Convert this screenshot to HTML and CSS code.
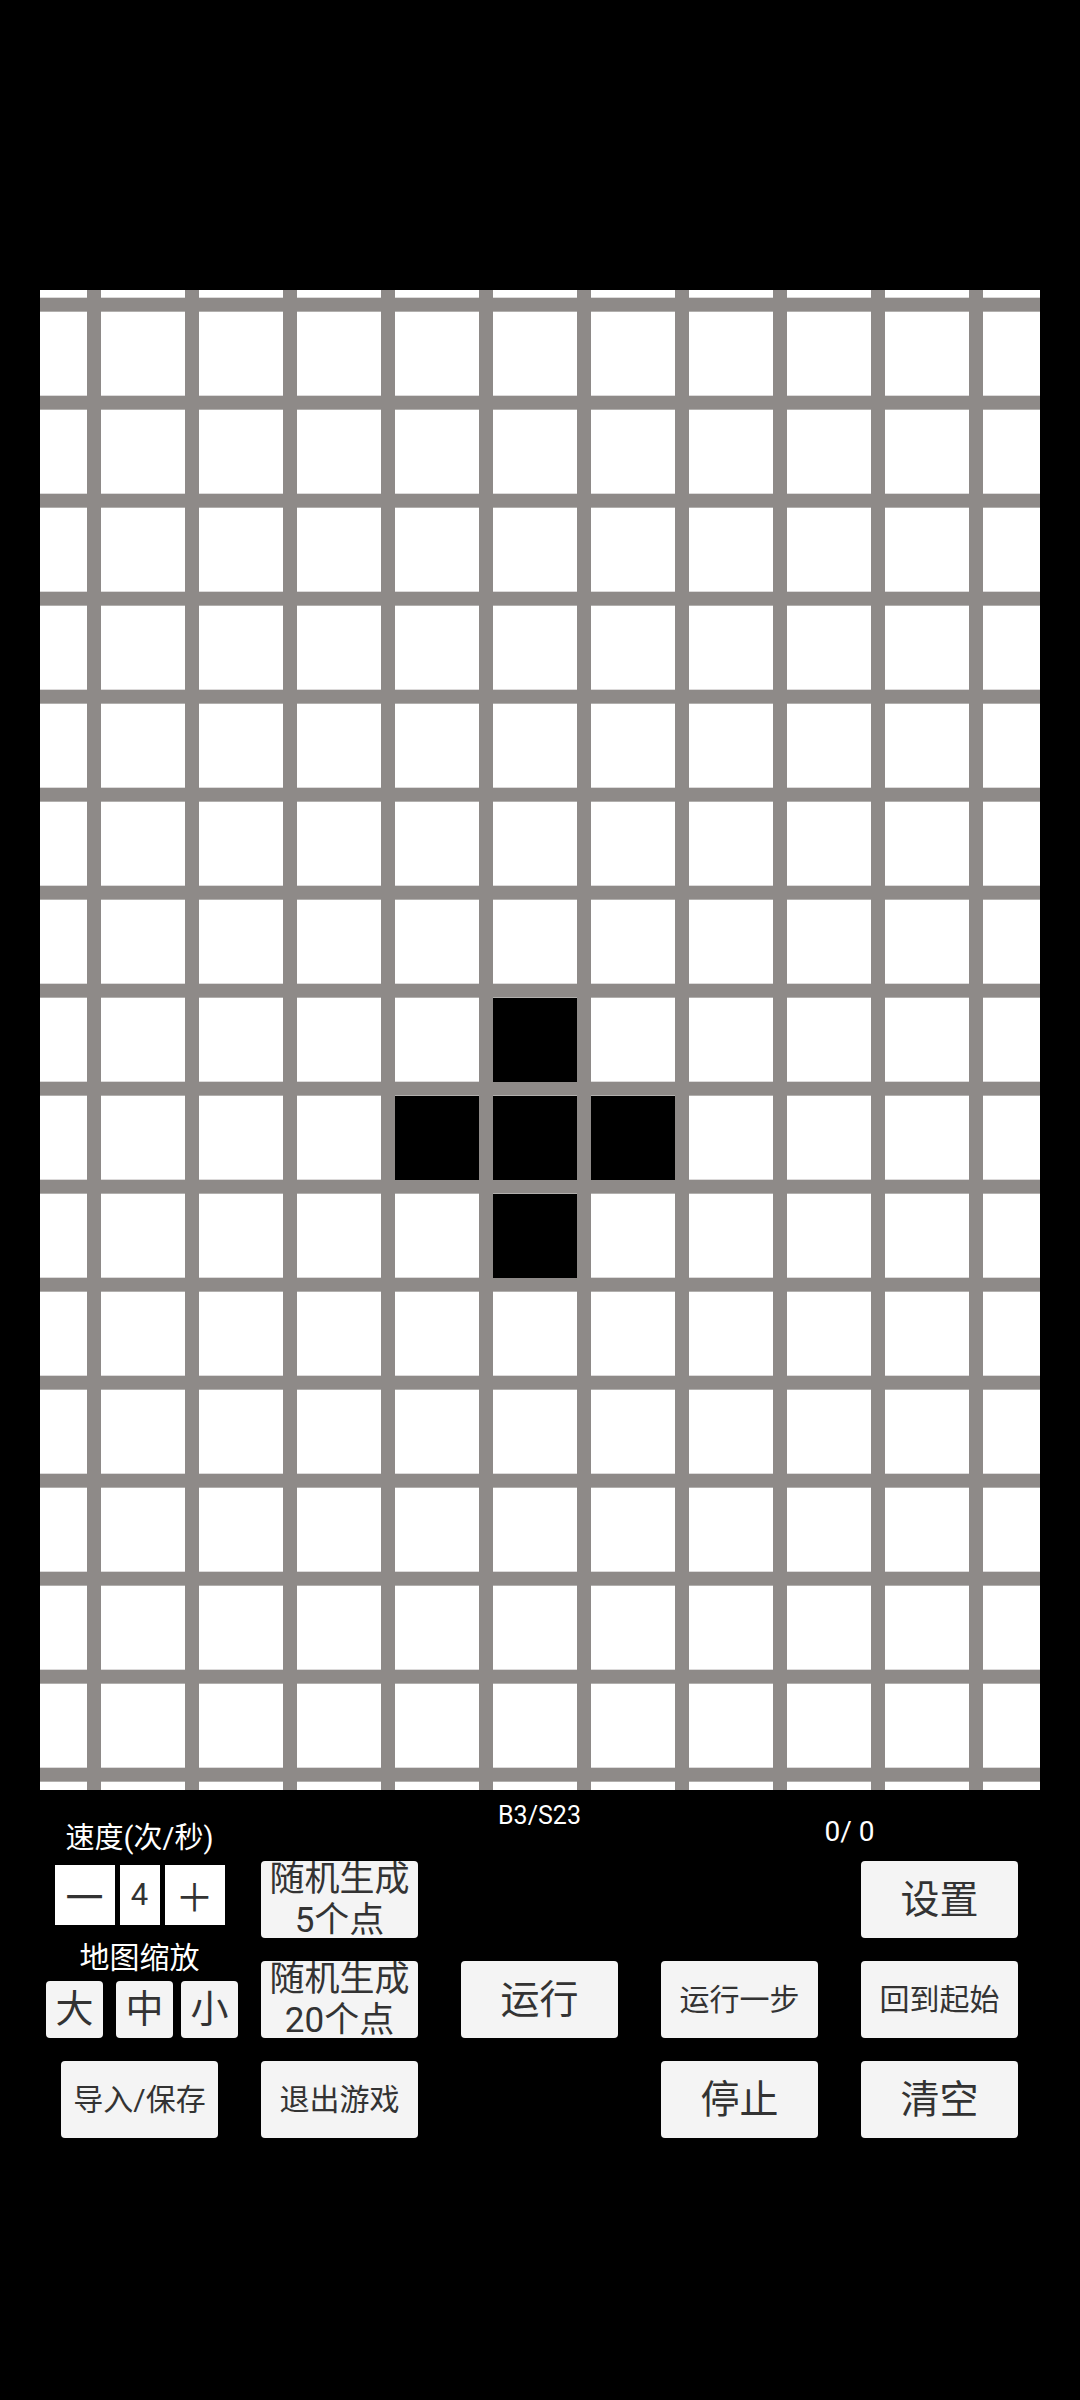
FILE: index.html
```html
<!DOCTYPE html>
<html lang="zh-CN">
<head>
<meta charset="utf-8">
<title>生命游戏</title>
<link rel="stylesheet" href="styles.css">
</head>
<body>
<div class="board">
  <div class="cells">
    <div class="cell live r9 c6"></div>
    <div class="cell live r10 c5"></div>
    <div class="cell live r10 c6"></div>
    <div class="cell live r10 c7"></div>
    <div class="cell live r11 c6"></div>
  </div>
</div>
<div class="panel">
  <div class="rule">B3/S23</div>
  <div class="count">0/ 0</div>

  <div class="left-controls">
    <div class="label">速度(次/秒)</div>
    <div class="speed-row">
      <button class="speed-btn wide">一</button>
      <div class="speed-btn narrow num">4</div>
      <button class="speed-btn wide">＋</button>
    </div>
    <div class="label zoom-label">地图缩放</div>
    <div class="zoom-row">
      <button class="btn zoom-btn">大</button>
      <button class="btn zoom-btn mid">中</button>
      <button class="btn zoom-btn small">小</button>
    </div>
  </div>

  <button class="btn two-line col2 row1">随机生成<br>5个点</button>
  <button class="btn two-line col2 row2">随机生成<br>20个点</button>
  <button class="btn small-text col1 row3">导入/保存</button>
  <button class="btn small-text col2 row3">退出游戏</button>
  <button class="btn big-text col3 row2">运行</button>
  <button class="btn small-text col4 row2">运行一步</button>
  <button class="btn big-text col4 row3">停止</button>
  <button class="btn big-text col5 row1">设置</button>
  <button class="btn small-text col5 row2">回到起始</button>
  <button class="btn big-text col5 row3">清空</button>
</div>
</body>
</html>
```

FILE: styles.css
```css
html, body {
  margin: 0;
  padding: 0;
  background: #000;
}

body {
  width: 1080px;
  height: 2400px;
  font-family: "Roboto", "Noto Sans CJK SC", sans-serif;
  color: #fff;
  overflow: hidden;
}

.board {
  margin: 290px 0 0 40px;
  width: 1000px;
  height: 1500px;
  overflow: hidden;
  background-color: #fff;
  background-image:
    linear-gradient(90deg, #8e8a88 14px, transparent 14px),
    linear-gradient(180deg, #8e8a88 14px, transparent 14px);
  background-size: 98px 98px;
  background-position: 47px 7.7px;
}

.cells {
  display: grid;
  grid-template-columns: repeat(11, 84px);
  grid-template-rows: repeat(17, 84px);
  gap: 14px;
  margin: -76.3px 0 0 -37px;
}

.cell.live { background: #000; }
.r9 { grid-row: 9; }
.r10 { grid-row: 10; }
.r11 { grid-row: 11; }
.c5 { grid-column: 5; }
.c6 { grid-column: 6; }
.c7 { grid-column: 7; }

.panel {
  display: grid;
  grid-template-columns: repeat(5, 157px);
  grid-template-rows: 48px repeat(3, 77px);
  column-gap: 43px;
  row-gap: 23px;
  padding-left: 61px;
}

.rule {
  grid-column: 3;
  grid-row: 1;
  padding-top: 11px;
  font-size: 25px;
  line-height: 30px;
  text-align: center;
}

.count {
  grid-column: 4 / 6;
  grid-row: 1;
  padding-top: 27px;
  padding-left: 20px;
  font-size: 28px;
  line-height: 30px;
  text-align: center;
}

.left-controls {
  grid-column: 1;
  grid-row: 1 / 4;
  align-self: end;
  display: flex;
  flex-direction: column;
  align-items: center;
}

.label {
  font-size: 29px;
  line-height: 36px;
  white-space: nowrap;
}

.zoom-label {
  font-size: 30px;
  margin-top: 15px;
}

.speed-row {
  display: flex;
  justify-content: center;
  gap: 5px;
  margin-top: 9px;
  width: 100%;
}

.speed-btn {
  flex: none;
  height: 60px;
  background: #fff;
  color: #333;
  border: 0;
  padding: 0;
  border-radius: 0;
  display: flex;
  align-items: center;
  justify-content: center;
  font-family: "Noto Sans CJK SC", sans-serif;
  font-size: 38px;
  line-height: 60px;
}

.speed-btn.wide { width: 60px; }
.speed-btn.narrow { width: 40px; }
.speed-btn.num {
  font-family: "Roboto", sans-serif;
  font-size: 31px;
}

.zoom-row {
  display: flex;
  justify-content: center;
  margin-top: 5px;
  padding-left: 5px;
  width: 100%;
  box-sizing: border-box;
}

.btn {
  border: 0;
  padding: 0;
  margin: 0;
  background: #f4f4f4;
  color: #333;
  border-radius: 4px;
  font-family: "Roboto", "Noto Sans CJK SC", sans-serif;
  display: flex;
  align-items: center;
  justify-content: center;
  text-align: center;
  white-space: nowrap;
}

.zoom-btn {
  flex: none;
  width: 57px;
  height: 57px;
  font-size: 38px;
  line-height: 57px;
}

.zoom-btn.mid { margin-left: 13px; }
.zoom-btn.small { margin-left: 8px; }

.two-line {
  font-size: 35px;
  line-height: 41px;
}

.small-text {
  font-size: 30px;
  line-height: 40px;
}

.big-text {
  font-size: 39px;
  line-height: 46px;
}

.col1 { grid-column: 1; }
.col2 { grid-column: 2; }
.col3 { grid-column: 3; }
.col4 { grid-column: 4; }
.col5 { grid-column: 5; }
.row1 { grid-row: 2; }
.row2 { grid-row: 3; }
.row3 { grid-row: 4; }
```
